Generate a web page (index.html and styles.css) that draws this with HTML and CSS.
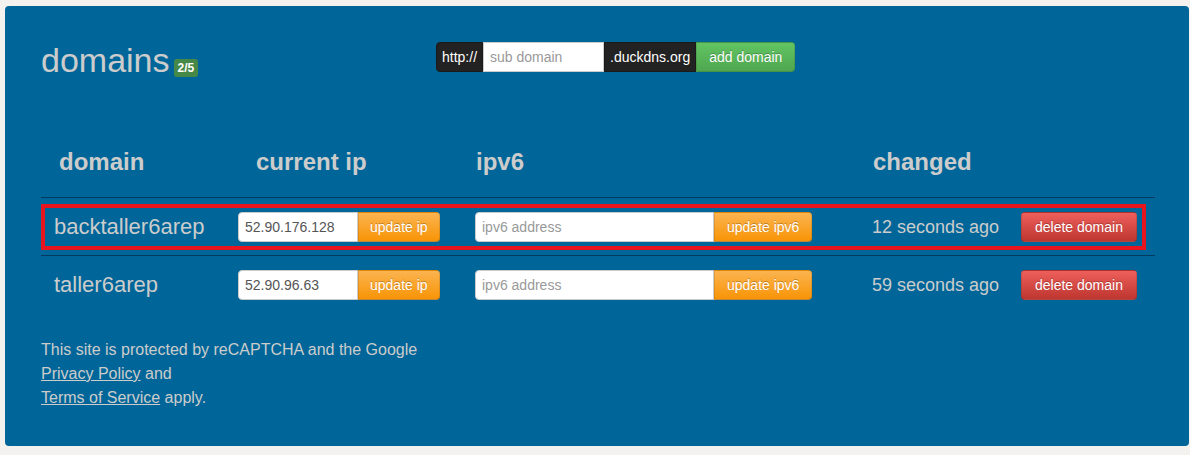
FILE: index.html
```html
<!DOCTYPE html>
<html lang="en">
<head>
<meta charset="utf-8">
<title>Duck DNS - domains</title>
<link rel="stylesheet" href="styles.css">
</head>
<body>
<div class="panel">
  <div class="top">
    <h1 class="title">domains<span class="badge">2/5</span></h1>
    <form class="add-form">
      <span class="addon addon-first">http://</span><input class="field sub" type="text" placeholder="sub domain"><span class="addon">.duckdns.org</span><button type="button" class="btn btn-success btn-end btn-add">add domain</button>
    </form>
  </div>

  <div class="domains">
    <div class="row head">
      <div class="th th-domain">domain</div>
      <div class="th th-ip">current ip</div>
      <div class="th th-v6">ipv6</div>
      <div class="th th-changed">changed</div>
      <div class="th"></div>
    </div>

    <div class="row item marked">
      <div class="name">backtaller6arep</div>
      <div class="group"><input class="field ip" type="text" value="52.90.176.128"><button type="button" class="btn btn-warning btn-end btn-ip">update ip</button></div>
      <div class="group"><input class="field v6" type="text" placeholder="ipv6 address"><button type="button" class="btn btn-warning btn-end">update ipv6</button></div>
      <div class="changed">12 seconds ago</div>
      <div><button type="button" class="btn btn-danger btn-del">delete domain</button></div>
      <div class="highlight"></div>
    </div>

    <div class="row item">
      <div class="name">taller6arep</div>
      <div class="group"><input class="field ip" type="text" value="52.90.96.63"><button type="button" class="btn btn-warning btn-end btn-ip">update ip</button></div>
      <div class="group"><input class="field v6" type="text" placeholder="ipv6 address"><button type="button" class="btn btn-warning btn-end">update ipv6</button></div>
      <div class="changed">59 seconds ago</div>
      <div><button type="button" class="btn btn-danger btn-del">delete domain</button></div>
    </div>
  </div>

  <p class="legal">This site is protected by reCAPTCHA and the Google<br><a href="#">Privacy Policy</a> and<br><a href="#">Terms of Service</a> apply.</p>
</div>
</body>
</html>
```

FILE: styles.css
```css
* { box-sizing: border-box; }

html, body {
  background: #f3f2ee;
}

body {
  margin: 6px 1px 0 5px;
  font-family: "Liberation Sans", Arial, Helvetica, sans-serif;
  color: #ccc;
}

.panel {
  background: #006699;
  border-radius: 4px;
  padding: 36px 34px 36px 36px;
  height: 440px;
}

.top {
  display: grid;
  grid-template-columns: 395px auto;
  align-items: start;
  height: 36px;
}

.title {
  margin: 0;
  font-size: 34px;
  line-height: 36px;
  font-weight: normal;
  color: #ccc;
}

.badge {
  display: inline-block;
  margin-left: 4px;
  padding: 2px 4px;
  font-size: 12px;
  line-height: 14px;
  font-weight: bold;
  color: #fff;
  background: #468847;
  border-radius: 3px;
  vertical-align: baseline;
}

.add-form {
  display: flex;
  margin: 0;
  height: 30px;
}

.addon {
  display: inline-block;
  height: 30px;
  padding: 4px 5px;
  font-size: 14px;
  line-height: 20px;
  color: #fff;
  background: #222;
  border: 1px solid #1a1a1a;
}

.addon-first {
  border-radius: 4px 0 0 4px;
}

.field {
  height: 30px;
  padding: 4px 6px;
  font-family: inherit;
  font-size: 14px;
  line-height: 20px;
  color: #555;
  background: #fff;
  border: 1px solid #ccc;
  border-radius: 0;
  outline: none;
}

.field::placeholder {
  color: #999;
}

.sub { width: 121px; }
.ip { width: 120px; border-radius: 4px 0 0 4px; }
.v6 { width: 239px; border-radius: 4px 0 0 4px; }

.btn {
  height: 30px;
  padding: 4px 12px;
  font-family: inherit;
  font-size: 14px;
  line-height: 20px;
  color: #fff;
  text-shadow: 0 -1px 0 rgba(0, 0, 0, 0.25);
  border: 1px solid;
  border-color: rgba(0, 0, 0, 0.1) rgba(0, 0, 0, 0.1) rgba(0, 0, 0, 0.25);
  border-radius: 4px;
  cursor: pointer;
  white-space: nowrap;
}

.btn-end { border-radius: 0 4px 4px 0; }
.btn-add { padding: 4px 12px; }
.btn-ip { padding: 4px 11px; }
.btn-del { padding: 4px 13px; }

.btn-success { background: linear-gradient(#62c462, #4fa74f); }
.btn-warning { background: linear-gradient(#fbb450, #f89406); }
.btn-danger  { background: linear-gradient(#ee5f5b, #bd362f); }

.domains {
  margin-top: 69px;
}

.row {
  display: grid;
  grid-template-columns: 197px 237px 395px 151px 134px;
  align-items: center;
}

.head {
  padding-bottom: 20px;
}

.th {
  font-size: 24px;
  line-height: 30px;
  font-weight: bold;
  color: #ccc;
}

.th-domain, .th-ip { padding-left: 18px; }
.th-v6 { padding-left: 1px; }
.th-changed { padding-left: 3px; }

.item {
  position: relative;
  border-top: 1px solid #003a5f;
  padding: 14px 0 13px;
}

.name {
  padding-left: 13px;
  font-size: 22px;
  line-height: 30px;
  color: #ccc;
}

.group {
  display: flex;
}

.changed {
  padding-left: 2px;
  font-size: 18px;
  line-height: 30px;
  color: #ccc;
}

.highlight {
  position: absolute;
  top: 6px;
  left: 0;
  width: 1105px;
  height: 46px;
  border: 4px solid #e8141e;
  pointer-events: none;
}

.legal {
  margin: 25px 0 0;
  font-size: 16px;
  line-height: 24px;
  color: #ccc;
}

.legal a {
  color: #ccc;
  text-decoration: underline;
}
```
